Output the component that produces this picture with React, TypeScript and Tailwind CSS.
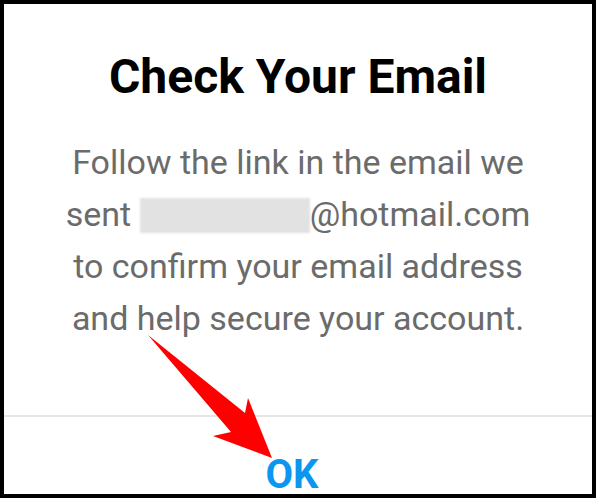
import React from 'react';

const Arrow: React.FC = () => (
  <svg
    className="pointer-events-none absolute left-0 top-0"
    width="596"
    height="498"
    viewBox="0 0 596 498"
  >
    <polygon
      points="148,335 245,413 248,398 272,458 213,436 231,432"
      fill="#ff0000"
    />
  </svg>
);

export const App: React.FC = () => {
  return (
    <div className="relative h-[498px] w-[596px] overflow-hidden">
      <div className="flex h-full w-full flex-col border-4 border-black bg-white font-['Roboto',sans-serif]">
        <h1 className="mt-[47px] text-center text-[48px] leading-[52px] font-bold text-black">
          Check Your Email
        </h1>

        <p className="mt-[33px] text-center text-[34px] leading-[52px] text-[#6b6b6b]">
          Follow the link in the email we
          <br />
          sent{' '}
          <span className="inline-block h-[35px] w-[170px] translate-y-[7px] bg-[#e2e2e2] blur-[1px]" />
          @hotmail.com
          <br />
          to confirm your email address
          <br />
          and help secure your account.
        </p>

        <div className="mt-auto h-[79px] shrink-0 overflow-hidden border-t-2 border-[#e6e6e6]">
          <button className="block w-full pt-[38px] pr-[12px] text-center text-[40px] leading-[40px] font-bold text-[#0b97f0]">
            OK
          </button>
        </div>
      </div>
      <Arrow />
    </div>
  );
};

export default App;
